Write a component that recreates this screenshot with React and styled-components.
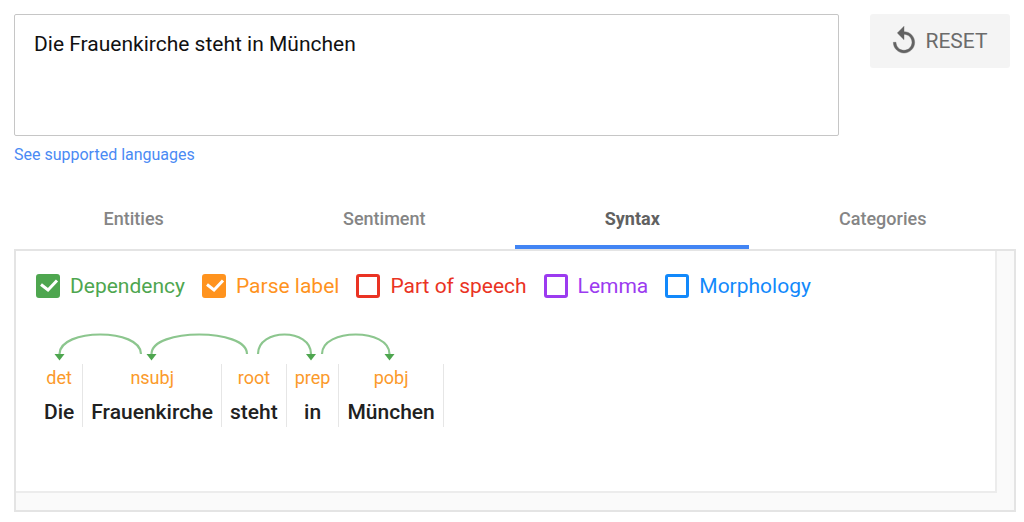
import React, { useState } from "react";
import styled, { createGlobalStyle } from "styled-components";

const GlobalStyle = createGlobalStyle`
  * {
    box-sizing: border-box;
  }

  body {
    margin: 0;
    background: #ffffff;
    font-family: Roboto, sans-serif;
  }
`;

const Page = styled.main`
  padding: 14px 8px 10px 14px;
`;

const InputRow = styled.div`
  display: flex;
  align-items: flex-start;
  gap: 31px;
  padding-right: 6px;
`;

const TextBox = styled.textarea`
  flex: 1;
  min-width: 0;
  height: 122px;
  padding: 17px 19px;
  border: 1px solid #c6c6c6;
  border-radius: 2px;
  outline: none;
  resize: none;
  color: #111111;
  background: #ffffff;
  font-family: inherit;
  font-size: 21px;
  line-height: 24px;
`;

const ResetButton = styled.button`
  display: flex;
  align-items: center;
  justify-content: center;
  gap: 5px;
  width: 140px;
  height: 54px;
  padding: 0 4px 0 0;
  border: 0;
  border-radius: 3px;
  color: #6b6b6b;
  background: #f4f4f4;
  font-family: inherit;
  font-size: 21px;
  line-height: 24px;
  cursor: pointer;
`;

const ReplayIcon = styled.svg`
  width: 32px;
  height: 32px;
  fill: #636363;
  stroke: #636363;
  stroke-width: 0.3;
`;

const LanguagesLink = styled.a`
  display: inline-block;
  margin-top: 9px;
  color: #4a8af4;
  font-size: 16px;
  line-height: 20px;
  text-decoration: none;
`;

const TabBar = styled.div`
  display: flex;
  margin-top: 24px;
`;

const Tab = styled.button`
  flex: 1 1 auto;
  height: 60px;
  padding: 3px 0 0;
  border: 0;
  border-bottom: 4px solid ${(props) => (props.$active ? "#4285f4" : "transparent")};
  color: ${(props) => (props.$active ? "#616161" : "#858585")};
  background: none;
  font-family: inherit;
  font-size: 18px;
  font-weight: ${(props) => (props.$active ? 700 : 500)};
  line-height: 24px;
  cursor: pointer;
`;

const Panel = styled.section`
  padding: 0 17px 17px 0;
  border: 2px solid #e4e4e4;
  background: #fafafa;
`;

const PanelContent = styled.div`
  min-height: 242px;
  padding: 23px 20px;
  border: solid #ececec;
  border-width: 0 2px 2px 0;
  background: #ffffff;
`;

const Options = styled.div`
  display: flex;
  flex-wrap: wrap;
  gap: 17px;
`;

const Option = styled.label`
  display: flex;
  align-items: center;
  gap: 10px;
  color: ${(props) => props.$color};
  font-size: 21px;
  line-height: 24px;
  cursor: pointer;
`;

const CheckFrame = styled.span`
  display: grid;
  width: 24px;
  height: 24px;

  > * {
    grid-area: 1 / 1;
  }
`;

const CheckInput = styled.input`
  appearance: none;
  width: 24px;
  height: 24px;
  margin: 0;
  border: 3px solid ${(props) => props.$color};
  border-radius: 3px;

  &:checked {
    background: ${(props) => props.$color};
  }
`;

const CheckMark = styled.svg`
  fill: none;
  stroke: #ffffff;
  stroke-width: 3;
  pointer-events: none;
`;

const Sentence = styled.div`
  margin-top: 33px;
`;

const Arcs = styled.svg`
  display: block;
  width: 406px;
  height: 33px;
`;

const ArcPath = styled.path`
  fill: none;
  stroke: #8cc68e;
  stroke-width: 2.2;
`;

const Tokens = styled.div`
  display: flex;
`;

const Token = styled.div`
  display: flex;
  flex-direction: column;
  align-items: center;
  gap: 10px;
  height: 63px;
  padding: 2px 8px 0;
  border-right: 1px solid #e6e6e6;
`;

const ParseLabel = styled.span`
  color: #fb9a2b;
  font-size: 18px;
  line-height: 24px;
`;

const Word = styled.span`
  color: #212121;
  font-size: 21px;
  font-weight: 500;
  line-height: 24px;
`;

const tabs = ["Entities", "Sentiment", "Syntax", "Categories"];

const options = [
  { name: "Dependency", color: "#4ea64f" },
  { name: "Parse label", color: "#ff931e" },
  { name: "Part of speech", color: "#ea3323" },
  { name: "Lemma", color: "#9c3bf0" },
  { name: "Morphology", color: "#1289fb" },
];

const tokens = [
  { word: "Die", label: "det" },
  { word: "Frauenkirche", label: "nsubj" },
  { word: "steht", label: "root" },
  { word: "in", label: "prep" },
  { word: "München", label: "pobj" },
];

// from = head word, to = dependent word
const arcs = [
  { from: 105, to: 23.5 },
  { from: 211, to: 115.5 },
  { from: 222, to: 275 },
  { from: 286, to: 353.5 },
];

const App = () => {
  const [text, setText] = useState("Die Frauenkirche steht in München");
  const [activeTab, setActiveTab] = useState("Syntax");
  const [checked, setChecked] = useState(["Dependency", "Parse label"]);

  const toggle = (name) => {
    if (checked.includes(name)) {
      setChecked(checked.filter((item) => item !== name));
    } else {
      setChecked([...checked, name]);
    }
  };

  return (
    <Page>
      <GlobalStyle />
      <InputRow>
        <TextBox
          aria-label="Text to analyze"
          value={text}
          onChange={(event) => setText(event.target.value)}
        />
        <ResetButton type="button" onClick={() => setText("")}>
          <ReplayIcon viewBox="0 0 24 24" aria-hidden="true">
            <path d="M12 5V1L7 6l5 5V7c3.31 0 6 2.69 6 6s-2.69 6-6 6-6-2.69-6-6H4c0 4.42 3.58 8 8 8s8-3.58 8-8-3.58-8-8-8z" />
          </ReplayIcon>
          RESET
        </ResetButton>
      </InputRow>
      <LanguagesLink href="#languages">See supported languages</LanguagesLink>

      <TabBar role="tablist">
        {tabs.map((tab) => (
          <Tab
            key={tab}
            type="button"
            role="tab"
            aria-selected={tab === activeTab}
            $active={tab === activeTab}
            onClick={() => setActiveTab(tab)}
          >
            {tab}
          </Tab>
        ))}
      </TabBar>

      <Panel>
        <PanelContent>
          <Options>
            {options.map(({ name, color }) => (
              <Option key={name} $color={color}>
                <CheckFrame>
                  <CheckInput
                    type="checkbox"
                    $color={color}
                    checked={checked.includes(name)}
                    onChange={() => toggle(name)}
                  />
                  {checked.includes(name) && (
                    <CheckMark viewBox="0 0 24 24">
                      <path d="M5 10.5 L12 16 L21 6.5" />
                    </CheckMark>
                  )}
                </CheckFrame>
                {name}
              </Option>
            ))}
          </Options>

          <Sentence>
            {/* dependency arrows above the words */}
            <Arcs viewBox="0 0 406 33">
              {arcs.map(({ from, to }) => (
                <g key={from}>
                  <ArcPath d={`M${from} 23 C${from} -3 ${to} -3 ${to} 23`} />
                  <path
                    d={`M${to - 5} 23 H${to + 5} L${to} 29.5 Z`}
                    fill="#4ea64f"
                  />
                </g>
              ))}
            </Arcs>
            <Tokens>
              {tokens.map(({ word, label }) => (
                <Token key={word}>
                  <ParseLabel>{label}</ParseLabel>
                  <Word>{word}</Word>
                </Token>
              ))}
            </Tokens>
          </Sentence>
        </PanelContent>
      </Panel>
    </Page>
  );
};

export default App;
